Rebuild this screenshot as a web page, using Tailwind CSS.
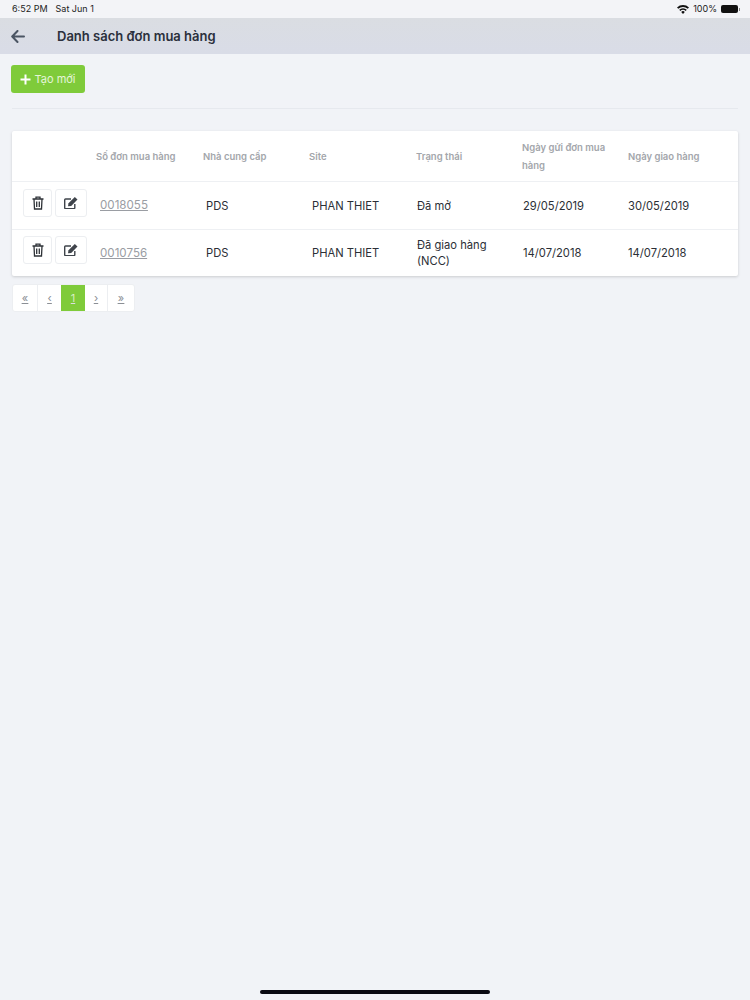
<!DOCTYPE html>
<html lang="vi">
<head>
  <meta charset="UTF-8" />
  <meta name="viewport" content="width=device-width, initial-scale=1.0" />
  <title>Danh sách đơn mua hàng</title>
  <script src="https://cdn.jsdelivr.net/npm/@tailwindcss/browser@4"></script>
</head>
<body class="bg-[#f1f3f7] font-['Inter','Liberation_Sans',sans-serif] text-[#2b2f36] h-[1000px] overflow-hidden relative">

  <!-- status bar -->
  <div class="h-[18px] flex items-center justify-between pl-3 pr-[10px] text-[9px] text-[#222] bg-[#f3f4f7]">
    <div class="flex gap-[8px]"><span>6:52 PM</span><span>Sat Jun 1</span></div>
    <div class="flex items-center gap-[4px]">
      <svg width="12" height="9" viewBox="0 0 12 9"><path d="M6 9 4.200 6.900a2.600 2.600 0 0 1 3.600 0zM3.300 5.900 2.200 4.700a5.500 5.500 0 0 1 7.600 0L8.700 5.900a4 4 0 0 0-5.400 0zM1.300 3.800 0 2.500a8.600 8.600 0 0 1 12 0l-1.300 1.300a6.800 6.800 0 0 0-9.400 0z" fill="#111"/></svg>
      <span>100%</span>
      <div class="flex items-center gap-px">
        <div class="w-[17px] h-[8px] rounded-[2px] bg-[#111]"></div>
        <div class="w-px h-[3px] bg-[#888]"></div>
      </div>
    </div>
  </div>

  <!-- header -->
  <div class="h-[36px] bg-gradient-to-b from-[#dadde2] to-[#d9dce7] flex items-center pl-[11px]">
    <svg width="14" height="13" viewBox="0 0 14 13" fill="none" stroke="#4b5563" stroke-width="2" stroke-linecap="round" stroke-linejoin="round"><path d="M13 6.500H1.500M6.500 1 1.200 6.500 6.500 12"/></svg>
    <h1 class="ml-[32px] pt-[2px] text-[13px] font-semibold text-[#2b303c]">Danh sách đơn mua hàng</h1>
  </div>

  <div class="px-3">
    <!-- toolbar -->
    <div class="pt-[11px] pb-[15px] border-b border-[#e6e9ee]">
      <button class="w-[74px] h-[28px] -ml-px rounded-[3px] bg-[#7fcb3a] text-white/80 text-[11px] flex items-center justify-center gap-[3px]">
        <svg width="11" height="11" viewBox="0 0 11 11" fill="none" stroke="#fff" stroke-width="2"><path d="M5.500 0.500v10M0.500 5.500h10"/></svg>
        Tạo mới
      </button>
    </div>

    <!-- table -->
    <div class="mt-[22px] bg-white rounded-[2px] shadow-[0_1px_3px_rgba(0,0,0,0.16)]">
      <table class="w-full table-fixed border-collapse text-[11.200px]">
        <colgroup>
          <col class="w-[84px]" /><col class="w-[106px]" /><col class="w-[106px]" /><col class="w-[107px]" /><col class="w-[106px]" /><col class="w-[106px]" /><col />
        </colgroup>
        <thead>
          <tr class="h-[50px] border-b border-[#eef0f3] text-left text-[9.500px] font-semibold leading-[18px] text-[#a3a6ab]">
            <th></th>
            <th class="font-semibold pt-[2px]">Số đơn mua hàng</th>
            <th class="font-semibold pt-[2px] pl-px">Nhà cung cấp</th>
            <th class="font-semibold pt-[2px] pl-px">Site</th>
            <th class="font-semibold pt-[2px] pl-px">Trạng thái</th>
            <th class="font-semibold pt-[2px] pl-px pr-2">Ngày gửi đơn mua hàng</th>
            <th class="font-semibold pt-[2px] pl-px">Ngày giao hàng</th>
          </tr>
        </thead>
        <tbody>
          <tr class="h-[48px] border-b border-[#eef0f3]">
            <td>
              <div class="flex gap-[3px] pl-[11px] -mt-[5px]">
                <button class="w-[29px] h-[28px] border border-[#eceef1] rounded-[3px] flex items-center justify-center">
                  <svg width="12" height="14" viewBox="0 0 12 14" fill="none" stroke="#2f3338" stroke-width="1.300"><path d="M0.500 3h11M4 3V1.200h4V3M2 3l0.500 10h7L10 3M4.700 5.500v5.500M7.300 5.500v5.500"/></svg>
                </button>
                <button class="w-[32px] h-[28px] border border-[#eceef1] rounded-[3px] flex items-center justify-center">
                  <svg width="14" height="12" viewBox="0 0 14 12" fill="none"><path d="M7 2H1.500a.8.800 0 0 0-.8.800v8a.8.800 0 0 0 .8.800h8.500a.8.800 0 0 0 .8-.8V7" stroke="#3f444b" stroke-width="1.400"/><path d="M4.500 6.200 10.800 0l2.700 2.600-6.300 6.300-3.200.4z" fill="#3f444b"/></svg>
                </button>
              </div>
            </td>
            <td class="pl-[4px] pt-[2px]"><a class="text-[11.600px] text-[#9a9da3] underline">0018055</a></td>
            <td class="pl-[4px] pt-[2px]">PDS</td>
            <td class="pl-[4px] pt-[2px]">PHAN THIET</td>
            <td class="pl-[2px] pt-[2px]">Đã mở</td>
            <td class="pl-[2px] pt-[2px]">29/05/2019</td>
            <td class="pl-[1px] pt-[2px]">30/05/2019</td>
          </tr>
          <tr class="h-[47px]">
            <td>
              <div class="flex gap-[3px] pl-[11px] -mt-[6px]">
                <button class="w-[29px] h-[28px] border border-[#eceef1] rounded-[3px] flex items-center justify-center">
                  <svg width="12" height="14" viewBox="0 0 12 14" fill="none" stroke="#2f3338" stroke-width="1.300"><path d="M0.500 3h11M4 3V1.200h4V3M2 3l0.500 10h7L10 3M4.700 5.500v5.500M7.300 5.500v5.500"/></svg>
                </button>
                <button class="w-[32px] h-[28px] border border-[#eceef1] rounded-[3px] flex items-center justify-center">
                  <svg width="14" height="12" viewBox="0 0 14 12" fill="none"><path d="M7 2H1.500a.8.800 0 0 0-.8.800v8a.8.800 0 0 0 .8.800h8.500a.8.800 0 0 0 .8-.8V7" stroke="#3f444b" stroke-width="1.400"/><path d="M4.500 6.200 10.800 0l2.700 2.600-6.300 6.300-3.200.4z" fill="#3f444b"/></svg>
                </button>
              </div>
            </td>
            <td class="pl-[4px] pt-[2px]"><a class="text-[11.600px] text-[#9a9da3] underline">0010756</a></td>
            <td class="pl-[4px] pt-[2px]">PDS</td>
            <td class="pl-[4px] pt-[2px]">PHAN THIET</td>
            <td class="pl-[2px] leading-[16px]">Đã giao hàng (NCC)</td>
            <td class="pl-[2px] pt-[2px]">14/07/2018</td>
            <td class="pl-[1px] pt-[2px]">14/07/2018</td>
          </tr>
        </tbody>
      </table>
    </div>

    <!-- pagination -->
    <div class="mt-[8px] w-fit flex h-[28px] bg-white rounded-[3px] border border-[#eceef1] text-[11px] text-[#8b8f95] underline">
      <a class="w-[25px] flex items-center justify-center border-r border-[#eceef1]">«</a>
      <a class="w-[23px] flex items-center justify-center">‹</a>
      <a class="w-[24px] flex items-center justify-center bg-[#7fcb3a] text-white/70">1</a>
      <a class="w-[23px] flex items-center justify-center border-r border-[#eceef1]">›</a>
      <a class="w-[26px] flex items-center justify-center">»</a>
    </div>
  </div>

  <!-- home indicator -->
  <div class="absolute bottom-[6px] left-[260px] w-[230px] h-[4px] rounded-full bg-[#0a0a12]"></div>
</body>
</html>
